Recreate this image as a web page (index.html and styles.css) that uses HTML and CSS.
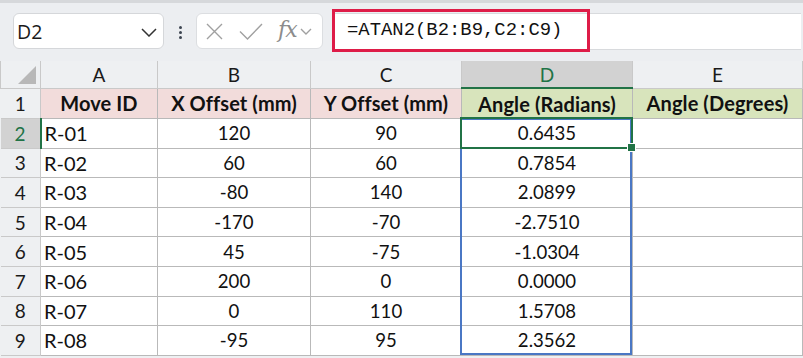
FILE: index.html
```html
<!DOCTYPE html>
<html>
<head>
<meta charset="utf-8">
<link rel="stylesheet" href="styles.css">
</head>
<body>
<div class="toolbar">
  <div class="namebox">
    <span class="nb-text">D2</span>
    <svg class="chev" width="16" height="9" viewBox="0 0 16 9"><path d="M1 1 L8 8 L15 1" fill="none" stroke="#333" stroke-width="1.5"/></svg>
  </div>
  <div class="dots"><span></span><span></span><span></span></div>
  <div class="fxbox">
    <svg class="ic-x" width="17" height="17" viewBox="0 0 17 17"><path d="M1 1 L16 16 M16 1 L1 16" stroke="#a0a0a0" stroke-width="1.4" fill="none"/></svg>
    <svg class="ic-ok" width="24" height="17" viewBox="0 0 24 17"><path d="M1 8.5 L8.5 16 L23 1" stroke="#a0a0a0" stroke-width="1.4" fill="none"/></svg>
    <span class="fx">fx</span>
    <svg class="ic-dd" width="12" height="8" viewBox="0 0 12 8"><path d="M1 1 L6 6 L11 1" fill="none" stroke="#a0a0a0" stroke-width="1.4"/></svg>
  </div>
  <div class="formula">
    <div class="formula-hl">=ATAN2(B2:B9,C2:C9)</div>
  </div>
</div>
<div class="sheet">
  <table class="grid">
    <colgroup>
      <col class="c-rh"><col class="c-a"><col class="c-b"><col class="c-c"><col class="c-d"><col class="c-e">
    </colgroup>
    <tr class="colhead">
      <th class="corner"><span class="tri"></span></th><th>A</th><th>B</th><th>C</th><th class="sel">D</th><th>E</th>
    </tr>
    <tr class="r1">
      <th class="rh">1</th>
      <td class="pink">Move ID</td><td class="pink">X Offset (mm)</td><td class="pink">Y Offset (mm)</td>
      <td class="green">Angle (Radians)</td><td class="green">Angle (Degrees)</td>
    </tr>
    <tr><th class="rh sel">2</th><td class="l">R-01</td><td>120</td><td>90</td><td>0.6435</td><td></td></tr>
    <tr><th class="rh">3</th><td class="l">R-02</td><td>60</td><td>60</td><td>0.7854</td><td></td></tr>
    <tr><th class="rh">4</th><td class="l">R-03</td><td>-80</td><td>140</td><td>2.0899</td><td></td></tr>
    <tr><th class="rh">5</th><td class="l">R-04</td><td>-170</td><td>-70</td><td>-2.7510</td><td></td></tr>
    <tr><th class="rh">6</th><td class="l">R-05</td><td>45</td><td>-75</td><td>-1.0304</td><td></td></tr>
    <tr><th class="rh">7</th><td class="l">R-06</td><td>200</td><td>0</td><td>0.0000</td><td></td></tr>
    <tr><th class="rh">8</th><td class="l">R-07</td><td>0</td><td>110</td><td>1.5708</td><td></td></tr>
    <tr><th class="rh">9</th><td class="l">R-08</td><td>-95</td><td>95</td><td>2.3562</td><td></td></tr>
  </table>
  <div class="range"></div>
  <div class="active"><span class="handle"></span></div>
</div>
</body>
</html>
```
FILE: styles.css
```css
html, body {
  margin: 0;
  padding: 0;
}
body {
  width: 803px;
  height: 358px;
  overflow: hidden;
  background: #eef0f2;
  font-family: "Lato", "Open Sans", sans-serif;
}
.toolbar {
  height: 61px;
  box-sizing: border-box;
  border-top: 3px solid #d6d8db;
  padding: 10px 0 0 13px;
  display: flex;
  align-items: flex-start;
  background: #eceef1;
}
.namebox {
  width: 151px;
  height: 36px;
  box-sizing: border-box;
  background: #fff;
  border: 1px solid #d5d7da;
  border-radius: 6px;
  display: flex;
  align-items: center;
  padding: 0 6px 0 3px;
  justify-content: space-between;
}
.nb-text {
  font-family: "Open Sans", "Noto Sans", sans-serif;
  font-size: 19.5px;
  color: #1a1a1a;
}
.chev {
  margin-top: 2px;
}
.dots {
  width: 32px;
  height: 36px;
  display: flex;
  flex-direction: column;
  align-items: center;
  justify-content: center;
  gap: 2px;
  padding-top: 2px;
  box-sizing: border-box;
}
.dots span {
  width: 3px;
  height: 3px;
  border-radius: 50%;
  background: #3c4450;
}
.fxbox {
  width: 127px;
  height: 36px;
  box-sizing: border-box;
  background: #fff;
  border: 1px solid #dcdee1;
  border-radius: 6px;
  display: flex;
  align-items: center;
  padding: 0 4px 0 9px;
}
.ic-x { margin-right: 16px; }
.ic-ok { margin-right: 15px; }
.fx {
  font-family: "DejaVu Serif", "Liberation Serif", serif;
  font-style: italic;
  font-size: 22px;
  color: #8c8c8c;
  letter-spacing: -1px;
  margin-right: 3px;
  line-height: 1;
  margin-top: -2px;
}
.ic-dd { margin-top: 1px; }
.formula {
  flex: 1;
  margin-left: 9px;
  height: 37px;
  box-sizing: border-box;
  background: #fff;
  border-top: 1px solid #d8dadd;
  border-bottom: 1px solid #d8dadd;
  margin-right: 2px;
  position: relative;
}
.formula-hl {
  position: absolute;
  left: 0;
  top: -5px;
  width: 258px;
  height: 43px;
  box-sizing: border-box;
  border: 3px solid #de1c48;
  font-family: "Liberation Mono", monospace;
  font-size: 18.9px;
  line-height: 37px;
  padding-left: 12px;
  color: #111;
}
.sheet {
  position: relative;
}
.grid {
  border-collapse: collapse;
  table-layout: fixed;
  width: 802px;
}
.c-rh { width: 40px; }
.c-a { width: 117px; }
.c-b { width: 153px; }
.c-c { width: 151px; }
.c-d { width: 171px; }
.c-e { width: 170px; }
.grid th, .grid td {
  border: 1px solid #b9b9b9;
  padding: 0;
  font-size: 18.6px;
  text-align: center;
  color: #111;
  white-space: nowrap;
  overflow: hidden;
}
.colhead th {
  height: 26px;
  background: #eef0f2;
  font-weight: normal;
  color: #1a1a1a;
  border-color: #c9c9c9;
  border-top: none;
  font-size: 19px;
}
.colhead th.sel {
  background: #d2d2d2;
  color: #217346;
  border-bottom: 2px solid #217346;
}
.corner {
  position: relative;
}
.tri {
  position: absolute;
  right: 4px;
  bottom: 4px;
  width: 0;
  height: 0;
  border-left: 18px solid transparent;
  border-bottom: 18px solid #b8b8b8;
}
.grid th.rh {
  background: #eef0f2;
  font-weight: normal;
  color: #1a1a1a;
  border-color: #c9c9c9;
  border-left: none;
  font-size: 19px;
}
.grid th.rh.sel {
  background: #d2d2d2;
  color: #217346;
  border-right: 2px solid #217346;
}
.r1 td, .r1 th {
  height: 29px;
}
.grid tr:not(.colhead):not(.r1) td,
.grid tr:not(.colhead):not(.r1) th {
  height: 28.6px;
}
.r1 td {
  font-weight: bold;
  font-size: 20px;
  letter-spacing: 0.1px;
}
.grid td { background-color: #fff; }
.grid td.pink { background: #f2dcdb; }
.grid td.green { background: #d8e4bc; }
.grid td.l {
  text-align: left;
  padding-left: 3px;
  font-size: 20px;
}
.range {
  position: absolute;
  left: 460px;
  top: 57px;
  width: 172px;
  height: 237px;
  box-sizing: border-box;
  border: 2px solid #4a77c4;
}
.active {
  position: absolute;
  left: 460px;
  top: 56px;
  width: 173px;
  height: 32px;
  box-sizing: border-box;
  border: 2px solid #217346;
}
.handle {
  position: absolute;
  right: -5px;
  bottom: -5px;
  width: 7px;
  height: 7px;
  background: #217346;
  border: 1px solid #fff;
}
```
